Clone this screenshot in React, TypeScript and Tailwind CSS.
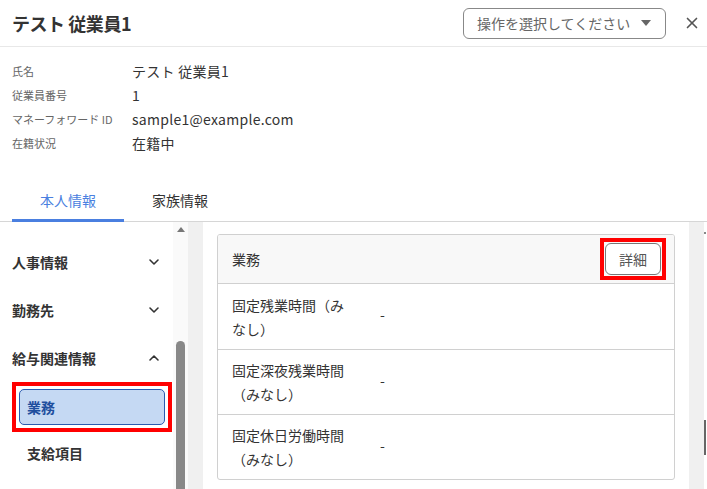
import { ChevronDown, ChevronUp, X } from "lucide-react";

const PROFILE = [
  { label: "氏名", value: "テスト 従業員1" },
  { label: "従業員番号", value: "1" },
  { label: "マネーフォワード ID", value: "sample1@example.com" },
  { label: "在籍状況", value: "在籍中" },
];

const ROWS = [
  "固定残業時間（みなし）",
  "固定深夜残業時間（みなし）",
  "固定休日労働時間（みなし）",
];

const SECTIONS = [
  { name: "人事情報", open: false },
  { name: "勤務先", open: false },
  { name: "給与関連情報", open: true },
];

export default function App() {
  return (
    <div
      className="w-[707px] h-[489px] overflow-hidden bg-white text-[#333]"
      style={{ fontFamily: '"Noto Sans CJK JP", "Noto Sans", sans-serif' }}
    >
      {/* header */}
      <div className="flex items-center h-[47px] border-b border-[#e8e8e8] pl-3 pr-[6px]">
        <h1 className="text-[18px] font-bold tracking-tight">テスト 従業員1</h1>
        <button className="ml-auto flex items-center h-[31px] w-[203px] px-[13px] border border-[#888] rounded-md text-[14px] text-[#666]">
          操作を選択してください
          <svg width="10" height="6" viewBox="0 0 10 6" className="ml-auto mr-[1px]">
            <path d="M0 0h10L5 6z" fill="#666" />
          </svg>
        </button>
        <X size={18} strokeWidth={2.2} className="ml-[17px] text-[#555]" />
      </div>

      {/* profile summary */}
      <div className="pt-[12px] pl-3 flex flex-col">
        {PROFILE.map((p) => (
          <div key={p.label} className="flex items-center h-[24px]">
            <span className="w-[120px] text-[11px] text-[#666]">{p.label}</span>
            <span className="text-[14px] tracking-[0.02em]">{p.value}</span>
          </div>
        ))}
      </div>

      {/* tabs */}
      <div className="mt-[35px] border-b border-[#d6d6d6] px-3 flex">
        <div className="w-[112px] text-center text-[14px] text-[#4a7fe0] pb-[8px] border-b-[3px] border-[#4a7fe0] -mb-[1px]">
          本人情報
        </div>
        <div className="w-[112px] text-center text-[14px] pb-[8px]">家族情報</div>
      </div>

      <div className="flex h-[267px]">
        {/* side navigation */}
        <div className="w-[173px] pt-[16px]">
          {SECTIONS.map((s) => (
            <div key={s.name} className="flex items-center h-[48px] pl-3 pr-[11px]">
              <span className="text-[14px] font-bold">{s.name}</span>
              {s.open ? (
                <ChevronUp size={16} strokeWidth={2.4} className="ml-auto" />
              ) : (
                <ChevronDown size={16} strokeWidth={2.4} className="ml-auto" />
              )}
            </div>
          ))}
          <div className="ml-3 w-[160px] h-[50px] border-4 border-[#ff0000] p-[3px]">
            <div className="h-full rounded-[5px] bg-[#c5d9f3] border border-[#2a5bb0] flex items-center pl-[7px] text-[14px] font-bold text-[#1f4f9e]">
              業務
            </div>
          </div>
          <div className="h-[42px] flex items-center pl-[27px] text-[14px] font-bold">支給項目</div>
        </div>

        {/* side scrollbar */}
        <div className="w-[15px] bg-[#fafafa] flex flex-col items-center">
          <svg width="8" height="5" viewBox="0 0 8 5" className="mt-[5px]">
            <path d="M0 5L4 0l4 5z" fill="#777" />
          </svg>
          <div className="mt-[109px] w-[9px] flex-1 rounded-t-full bg-[#888]" />
        </div>
        <div className="w-[15px] bg-[#f0f0f0]" />

        {/* detail panel */}
        <div className="w-[486px] px-[14px] pt-[12px]">
          <div className="border border-[#d0d0d0] rounded-[3px] overflow-hidden">
            <div className="h-[49px] bg-[#f8f8f8] border-b border-[#d0d0d0] flex items-center pl-[14px] pr-[8px]">
              <span className="text-[14px]">業務</span>
              <div className="ml-auto border-4 border-[#ff0000] p-[1px]">
                <button className="w-[56px] h-[32px] rounded-md border border-[#777] bg-white text-[14px] text-[#555]">
                  詳細
                </button>
              </div>
            </div>
            {ROWS.map((r, i) => (
              <div
                key={r}
                className={`h-[65px] flex items-center pl-[14px] ${i > 0 ? "border-t border-[#d0d0d0]" : ""}`}
              >
                <span className="w-[148px] pr-[24px] text-[14px] leading-[24px]">{r}</span>
                <span className="text-[14px] -mt-[4px]">-</span>
              </div>
            ))}
          </div>
        </div>
        <div className="w-[15px] bg-[#f0f0f0]" />
        <div className="w-[3px] flex flex-col">
          <div className="mt-[10px] h-[2px] w-[2px] bg-[#888]" />
          <div className="mt-[186px] h-[35px] w-[2px] bg-[#666]" />
        </div>
      </div>
    </div>
  );
}
